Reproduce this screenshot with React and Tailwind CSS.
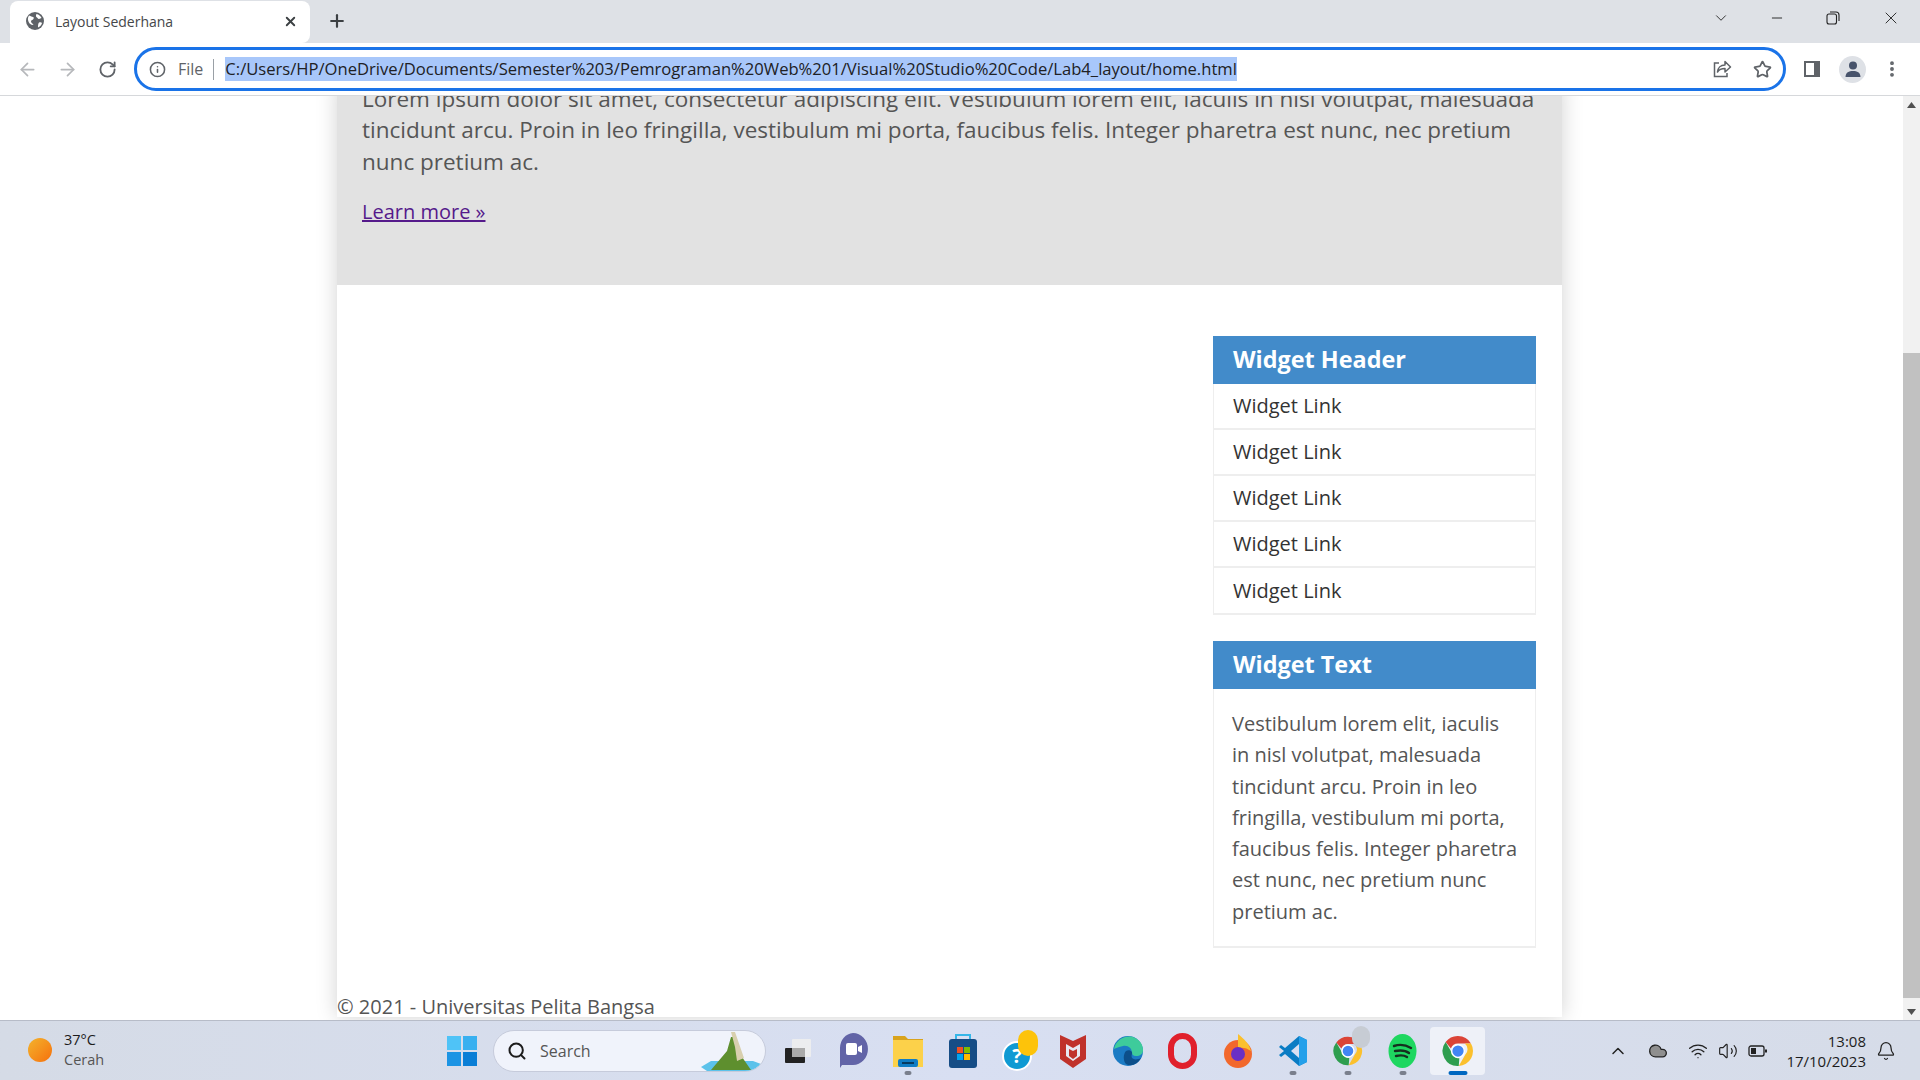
import { ArrowLeft, ArrowRight, RotateCw, Info, Star, MoreVertical, ChevronDown, ChevronUp, Minus, X, Plus, Search, Wifi, Volume2, Bell, Cloud } from "lucide-react";

const FONT = "font-['Open_Sans','Noto_Sans',sans-serif]";

function Chrome({ size = 36 }) {
  return (
    <svg width={size} height={size} viewBox="0 0 48 48">
      <path d="M24 4a20 20 0 0 1 17.3 10H24a10 10 0 0 0-9.4 6.6L7.5 12A20 20 0 0 1 24 4z" fill="#db4437" />
      <path d="M41.3 14A20 20 0 0 1 25 44l8.6-15A10 10 0 0 0 33 14z" fill="#fbc02d" />
      <path d="M7.5 12l8.7 15a10 10 0 0 0 9.6 6.8L25 44A20 20 0 0 1 7.5 12z" fill="#2e9e4f" />
      <circle cx="24" cy="24" r="8.5" fill="#4285f4" stroke="#fff" strokeWidth="2" />
    </svg>
  );
}

function TaskIcon({ children, dot, active }) {
  return (
    <div className={`relative flex h-[48px] w-[55px] items-center justify-center rounded ${active ? "bg-[#eef1f8]" : ""}`}>
      {children}
      {dot && <span className="absolute bottom-[0px] left-1/2 h-[4px] w-[7px] -translate-x-1/2 rounded bg-[#7a7f8c]" />}
      {active && <span className="absolute bottom-[0px] left-1/2 h-[4px] w-[19px] -translate-x-1/2 rounded bg-[#0067c0]" />}
    </div>
  );
}

function Widget({ title, children }) {
  return (
    <div className="border-2 border-t-0 border-[#eeeeee] border-l border-r">
      <h3 className="bg-[#428bca] px-[20px] h-[48px] flex items-center text-[23.400px] font-bold text-white -mx-px">{title}</h3>
      {children}
    </div>
  );
}

export default function App() {
  return (
    <div className={`flex h-screen w-[1920px] flex-col overflow-hidden bg-white ${FONT}`}>
      {/* tabs */}
      <div className="flex h-[43px] shrink-0 items-end bg-[#dee1e6] pl-[10px]">
        <div className="flex w-[300px] items-center self-start rounded-t-lg rounded-br-lg bg-white pl-[16px] pr-[12px] mt-[1px] h-[42px]">
          <svg width="18" height="18" viewBox="0 0 18 18" className="-mt-[2px]">
            <circle cx="9" cy="9" r="9" fill="#5f6368" />
            <path d="M3 3.500c2 .5 3 1.500 4 1.500s1 1.500 0 2.500-2 .5-2 2 2 2 2.500 3.500c-3 0-5-2-5.500-5-.2-1.500 0-3 1-4.500z" fill="#fff" />
            <path d="M10.500 2c2.500.5 4 2 5 4l-2.500 1c-1 .3-1-1-2-1.500s-1.500-2-.500-3.500zM13 10.500c1-.5 2.500-.5 3 .5-.5 2-2 3.500-4 4.500 0-2 0-4 1-5z" fill="#fff" />
          </svg>
          <span className="ml-[11px] -mt-[2px] flex-1 text-[14px] text-[#45474a]">Layout Sederhana</span>
          <X size={15} strokeWidth={3} className="-mt-[1px] text-[#3c4043]" />
        </div>
        <div className="ml-[2px] flex h-[42px] w-[50px] items-center justify-center self-start">
          <Plus size={20} strokeWidth={2.6} className="text-[#3c4043]" />
        </div>
        <div className="ml-auto -mt-[1px] flex h-[38px] items-center self-start text-[#222]">
          <ChevronDown size={18} strokeWidth={1.2} className="mr-[39px]" />
          <Minus size={16} strokeWidth={1.4} className="mr-[41px]" />
          <svg width="14" height="14" viewBox="0 0 14 14" fill="none" stroke="#222" strokeWidth="1.1" className="mr-[41px]">
            <rect x="1" y="3" width="9.5" height="10" rx="2" />
            <path d="M4 1h6a3 3 0 0 1 3 3v6" />
          </svg>
          <X size={20} strokeWidth={1.1} className="mr-[19px]" />
        </div>
      </div>

      {/* toolbar */}
      <div className="flex h-[53px] shrink-0 items-center border-b border-[#d6d8db] bg-white pl-[17px] pr-[10px]">
        <ArrowLeft size={21} className="text-[#b6b8bb]" />
        <ArrowRight size={21} className="ml-[19px] text-[#b6b8bb]" />
        <RotateCw size={19} strokeWidth={2.3} className="ml-[20px] text-[#5f6368]" />
        <div className="ml-[17px] flex h-[44px] w-[1652px] items-center rounded-full border-[3px] border-[#1a73e8] pl-[12px] pr-[11px]">
          <Info size={17} className="text-[#5f6368]" strokeWidth={2.2} />
          <span className="ml-[12px] text-[16px] text-[#5f6368]">File</span>
          <span className="ml-[10px] mr-[11px] h-[21px] w-[1px] bg-[#9aa0a6]" />
          <span className="flex h-[24px] items-center bg-[#a8c7fa] text-[16.600px] text-[#202124]">C:/Users/HP/OneDrive/Documents/Semester%203/Pemrograman%20Web%201/Visual%20Studio%20Code/Lab4_layout/home.html</span>
          <svg width="20" height="20" viewBox="0 0 20 20" fill="none" stroke="#5f6368" strokeWidth="1.500" className="ml-auto">
            <path d="M7 4H2.500v13.500H15V14" />
            <path d="M5.500 13c.3-4 3-7 7.500-7V2.500L18.500 8 13 13V9.500c-3.500 0-6 1-7.500 3.500z" strokeLinejoin="round" />
          </svg>
          <Star size={19} strokeWidth={2.2} className="ml-[21px] text-[#5f6368]" />
        </div>
        <svg width="18" height="18" viewBox="0 0 18 18" className="ml-[17px]">
          <path d="M1 1h16v16H1z M3 3v12h8V3z" fillRule="evenodd" fill="#5f6368" />
          <path d="M11 3h4v12h-4z" fill="#5f6368" />
        </svg>
        <div className="ml-[18px] flex h-[27px] w-[27px] items-center justify-center rounded-full bg-[#dee1e6]">
          <svg width="18" height="18" viewBox="0 0 18 18" fill="#47536b">
            <circle cx="9" cy="5.500" r="4" />
            <path d="M1.500 17c0-4.500 3.500-6 7.500-6s7.500 1.500 7.500 6z" />
          </svg>
        </div>
        <MoreVertical size={20} strokeWidth={2.6} className="ml-[16px] text-[#5f6368]" />
      </div>

      {/* page */}
      <div className="flex min-h-0 flex-1">
        <div className="min-w-0 flex-1 overflow-hidden">
          <div className="ml-[337px] -mt-[13px] w-[1225px] bg-white shadow-[0_0_20px_rgba(0,0,0,0.18)]">
            <div className="h-[202px] bg-[#e2e2e2] px-[25px] text-[#555]">
              <p className="text-[22.500px] leading-[31.250px]">
                Lorem ipsum dolor sit amet, consectetur adipiscing elit. Vestibulum lorem elit, iaculis in nisl volutpat, malesuada tincidunt arcu. Proin in leo fringilla, vestibulum mi porta, faucibus felis. Integer pharetra est nunc, nec pretium nunc pretium ac.
              </p>
              <p className="mt-[19px] text-[20px] leading-[31px]">
                <a href="#" className="text-[#551a8b] underline">Learn more »</a>
              </p>
            </div>
            <div className="flex h-[732px] flex-col">
              <div className="flex min-h-0 flex-1 justify-end pr-[26px] pt-[51px]">
                <aside className="flex w-[323px] flex-col gap-[26px]">
                  <Widget title="Widget Header">
                    <ul>
                      {[0, 1, 2, 3, 4].map((i) => (
                        <li key={i} className={`flex items-center px-[19px] text-[20px] text-[#333] ${i < 4 ? "h-[46px] border-b-2 border-[#eeeeee]" : "h-[45px]"}`}>Widget Link</li>
                      ))}
                    </ul>
                  </Widget>
                  <Widget title="Widget Text">
                    <p className="pl-[18px] pr-[16px] pt-[19px] pb-[19px] text-[20px] leading-[31.250px] text-[#555]">
                      Vestibulum lorem elit, iaculis in nisl volutpat, malesuada tincidunt arcu. Proin in leo fringilla, vestibulum mi porta, faucibus felis. Integer pharetra est nunc, nec pretium nunc pretium ac.
                    </p>
                  </Widget>
                </aside>
              </div>
              <footer className="h-[26px] text-[20px] leading-[31px] text-[#555]">© 2021 - Universitas Pelita Bangsa</footer>
            </div>
          </div>
        </div>
        {/* scrollbar */}
        <div className="flex w-[17px] shrink-0 flex-col bg-[#f1f1f1]">
          <div className="flex h-[17px] items-center justify-center text-[#505050]">
            <svg width="9" height="6" viewBox="0 0 9 6" fill="currentColor"><path d="M4.500 0L9 6H0z" /></svg>
          </div>
          <div className="mt-[240px] h-[645px] bg-[#c1c1c1]" />
          <div className="mt-auto flex h-[17px] items-center justify-center text-[#505050]">
            <svg width="9" height="6" viewBox="0 0 9 6" fill="currentColor"><path d="M4.500 6L9 0H0z" /></svg>
          </div>
        </div>
      </div>

      {/* taskbar */}
      <div className="flex h-[60px] shrink-0 items-center border-t border-[#b7bcc8] bg-gradient-to-r from-[#d5dbe6] via-[#d8dff2] to-[#d6dce8] text-[#1c1c1c]">
        <div className="flex w-[432px] shrink-0 items-center pl-[28px]">
          <span className="h-[24px] w-[24px] -mt-[2px] rounded-full bg-gradient-to-br from-[#f2b32c] to-[#f56f0a]" />
          <div className="ml-[12px] -mt-[2px] text-[14.500px] leading-[20px]">
            <div>37°C</div>
            <div className="text-[#555]">Cerah</div>
          </div>
        </div>
        <div className="flex w-[60px] shrink-0 items-center justify-center">
          <svg width="30" height="30" viewBox="0 0 30 30">
            <rect x="0" y="0" width="14" height="14" fill="#4fc3f7" />
            <rect x="16" y="0" width="14" height="14" fill="#38b0f0" />
            <rect x="0" y="16" width="14" height="14" fill="#1c94e4" />
            <rect x="16" y="16" width="14" height="14" fill="#0a7ed6" />
          </svg>
        </div>
        <div className="relative ml-[1px] flex h-[42px] w-[273px] shrink-0 items-center overflow-hidden rounded-full border border-[#c6cbdb] bg-[#f0f3fb] pl-[13px]">
          <Search size={20} strokeWidth={2.4} className="text-[#1c1c1c]" />
          <span className="ml-[13px] text-[16px] text-[#555]">Search</span>
          <svg width="64" height="40" viewBox="0 0 64 40" className="absolute bottom-0 right-[2px]">
            <path d="M2 36l10-6h42l8 3-4 7H8z" fill="#5cc2ea" />
            <path d="M12 39L28 20 32 6h3l8 20 9 13z" fill="#5e8f2e" />
            <path d="M32 1h4l9 26-7 3-2-14z" fill="#d8cfae" />
          </svg>
        </div>
        <div className="ml-[4px] flex items-center">
          <TaskIcon>
            <svg width="28" height="26" viewBox="0 0 28 26">
              <rect x="1" y="10" width="20" height="15" rx="1" fill="#222" />
              <rect x="8" y="1" width="19" height="18" rx="1" fill="#eee" fillOpacity="0.9" />
              <rect x="8" y="10" width="13" height="9" fill="#aaa" />
            </svg>
          </TaskIcon>
          <TaskIcon>
            <svg width="30" height="38" viewBox="0 0 30 38">
              <path d="M15 1a14 15 0 0 1 0 32H4l-2 3V16A14 15 0 0 1 15 1z" fill="#6264a7" />
              <rect x="8" y="11" width="11" height="12" rx="2" fill="#fff" />
              <path d="M20 15l4-2v8l-4-2z" fill="#fff" />
            </svg>
          </TaskIcon>
          <TaskIcon dot>
            <svg width="32" height="36" viewBox="0 0 32 36">
              <path d="M1 3h12l3 3h15v6H1z" fill="#d9a31c" />
              <rect x="1" y="7" width="30" height="27" fill="#fcd14a" />
              <rect x="6" y="26" width="20" height="8" rx="2" fill="#0f7cc4" />
              <rect x="10" y="29" width="12" height="2" fill="#063a60" />
            </svg>
          </TaskIcon>
          <TaskIcon>
            <svg width="30" height="36" viewBox="0 0 30 36">
              <path d="M8 7V2h14v5" fill="none" stroke="#35b6e8" strokeWidth="2" />
              <rect x="1" y="6" width="28" height="29" rx="3" fill="#164d86" />
              <rect x="9" y="14" width="6" height="6" fill="#f25022" />
              <rect x="16" y="14" width="6" height="6" fill="#7fba00" />
              <rect x="9" y="21" width="6" height="6" fill="#00a4ef" />
              <rect x="16" y="21" width="6" height="6" fill="#ffb900" />
            </svg>
          </TaskIcon>
          <TaskIcon>
            <div className="relative ml-[5px] h-[42px] w-[36px]">
              <div className="absolute bottom-[1px] left-0 flex h-[30px] w-[30px] items-center justify-center rounded-full border-2 border-white bg-[#0f9ad3] text-[20px] font-bold text-white">?</div>
              <div className="absolute right-0 top-0 h-[26px] w-[20px] rounded-full bg-[#fdc30a]" />
            </div>
          </TaskIcon>
          <TaskIcon>
            <svg width="28" height="36" viewBox="0 0 28 36">
              <path d="M1 2l13 6 13-6v24l-13 9L1 26z" fill="#c0322b" />
              <path d="M7 11l7 4 7-4v12l-7 5-7-5z" fill="#e7e9f2" />
              <path d="M10 16l4 2 4-2v7l-4 3-4-3z" fill="#c0322b" />
            </svg>
          </TaskIcon>
          <TaskIcon>
            <svg width="32" height="32" viewBox="0 0 32 32">
              <circle cx="16" cy="16" r="15" fill="#1b7bc4" />
              <path d="M2 14C4 4 14 0 21 2c6 2 10 7 10 13 0 4-3 6-7 6-3 0-4-2-4-3 0-5-4-8-9-7-4 1-7 2-9 3z" fill="#3ecb9b" />
              <path d="M14 16c3-2 7 0 6 3-2 5 3 7 9 4-3 6-10 9-15 6-3-3-3-10 0-13z" fill="#0c4f8a" />
            </svg>
          </TaskIcon>
          <TaskIcon>
            <div className="h-[36px] w-[29px] rounded-full border-[6px] border-[#e0202c]" />
          </TaskIcon>
          <TaskIcon>
            <svg width="30" height="36" viewBox="0 0 30 36">
              <circle cx="15" cy="21" r="14" fill="#f2682c" />
              <path d="M15 1c6 5 11 9 13 17-4-3-8-4-13-3z" fill="#fbc02d" />
              <circle cx="15" cy="21" r="7" fill="#6a2fc4" />
            </svg>
          </TaskIcon>
          <TaskIcon dot>
            <svg width="30" height="32" viewBox="0 0 30 32">
              <path d="M21 1l8 4v22l-8 4L7 19l-4 3-2-2 5-4-5-4 2-2 4 3z" fill="#0a7cc4" />
              <path d="M21 1l8 4v22l-8 4z" fill="#24a0ea" />
              <path d="M21 9L13 16l8 7z" fill="#d8dff2" />
            </svg>
          </TaskIcon>
          <TaskIcon dot>
            <div className="relative">
              <Chrome size={34} />
              <div className="absolute -right-[5px] -top-[8px] h-[22px] w-[18px] rounded-full bg-[#c7ccd4]" />
            </div>
          </TaskIcon>
          <TaskIcon dot>
            <svg width="29" height="36" viewBox="0 0 29 36">
              <ellipse cx="14.500" cy="18" rx="14" ry="17" fill="#1ed760" />
              <path d="M6 13c6-2 12-1 17 2M7 18c5-1 10-1 14 2M8 23c4-1 8-1 11 1" stroke="#15301f" strokeWidth="2.400" fill="none" strokeLinecap="round" />
            </svg>
          </TaskIcon>
          <TaskIcon active>
            <Chrome size={36} />
          </TaskIcon>
        </div>
        <div className="ml-auto flex items-center pr-[24px]">
          <ChevronUp size={20} strokeWidth={1.8} className="text-[#222]" />
          <Cloud size={20} fill="#8f8f8f" strokeWidth={1.6} className="ml-[20px] text-[#222]" />
          <Wifi size={20} strokeWidth={1.6} className="ml-[20px] text-[#222]" />
          <Volume2 size={20} strokeWidth={1.4} className="ml-[10px] text-[#222]" />
          <svg width="20" height="12" viewBox="0 0 20 12" fill="none" className="ml-[10px]">
            <rect x="1" y="1" width="15" height="10" rx="2" stroke="#222" strokeWidth="1.300" />
            <rect x="3" y="3" width="5" height="6" fill="#222" />
            <rect x="17" y="4.500" width="2" height="3" fill="#222" />
          </svg>
          <div className="ml-[18px] text-right text-[15px] leading-[20px]">
            <div>13:08</div>
            <div>17/10/2023</div>
          </div>
          <Bell size={20} strokeWidth={1.5} className="ml-[10px] text-[#222]" />
        </div>
      </div>
    </div>
  );
}
